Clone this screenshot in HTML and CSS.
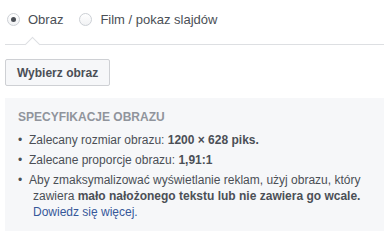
FILE: index.html
```html
<!DOCTYPE html>
<html lang="pl">
<head>
<meta charset="utf-8">
<link rel="stylesheet" href="styles.css">
</head>
<body>
<div class="page">
  <div class="tabs">
    <label class="opt"><span class="radio checked"></span><span class="opt-text">Obraz</span></label>
    <label class="opt"><span class="radio"></span><span class="opt-text">Film / pokaz slajdów</span></label>
    <span class="caret"></span>
  </div>
  <button class="btn">Wybierz obraz</button>
  <div class="spec">
    <div class="spec-title">SPECYFIKACJE OBRAZU</div>
    <ul class="spec-list">
      <li><span class="dot">•</span><span class="txt">Zalecany rozmiar obrazu: <b>1200 × 628 piks.</b></span></li>
      <li><span class="dot">•</span><span class="txt">Zalecane proporcje obrazu: <b>1,91:1</b></span></li>
      <li><span class="dot">•</span><span class="txt wrap">Aby zmaksymalizować wyświetlanie reklam, użyj obrazu, który zawiera <b>mało nałożonego tekstu lub nie zawiera go wcale.</b> <a class="link" href="#">Dowiedz się więcej.</a></span></li>
    </ul>
  </div>
</div>
</body>
</html>
```
FILE: styles.css
```css
* { box-sizing: border-box; }
html, body { margin: 0; padding: 0; background: #fff; }
body {
  font-family: "Liberation Sans", Arial, sans-serif;
  font-size: 12px;
  color: #4b4f56;
}
.page { padding: 0 4px 0 5px; }

.tabs {
  position: relative;
  height: 45px;
  border-bottom: 1px solid #dddfe2;
  display: flex;
  align-items: center;
  padding: 0 0 6px 2px;
  gap: 16px;
}
.opt {
  display: flex;
  align-items: center;
  gap: 8px;
  font-size: 13px;
  color: #4b4f56;
}
.radio {
  width: 13px;
  height: 13px;
  border-radius: 50%;
  border: 1px solid #ccd0d5;
  background: linear-gradient(#fff, #f1f2f4);
  display: flex;
  align-items: center;
  justify-content: center;
}
.radio.checked::after {
  content: "";
  width: 5px;
  height: 5px;
  border-radius: 50%;
  background: #4b4f56;
}
.caret {
  position: absolute;
  left: 22px;
  bottom: -6px;
  width: 11px;
  height: 11px;
  background: #fff;
  border-left: 1px solid #dddfe2;
  border-top: 1px solid #dddfe2;
  transform: rotate(45deg);
}

.btn {
  display: block;
  margin-top: 14px;
  height: 27px;
  padding: 0 11px;
  border: 1px solid #ced0d4;
  border-radius: 2px;
  background: #f6f7f9;
  color: #4b4f56;
  font-family: "Liberation Sans", Arial, sans-serif;
  font-size: 12px;
  font-weight: bold;
}

.spec {
  margin-top: 12px;
  background: #f6f7f9;
  padding: 11px 12px 11px 13px;
}
.spec-title {
  line-height: 16px;
  font-weight: bold;
  color: #90949c;
  margin-bottom: 7px;
}
.spec-list {
  list-style: none;
  margin: 0;
  padding: 0;
}
.spec-list li {
  display: flex;
  line-height: 16px;
  margin-top: 4px;
}
.spec-list li:first-child { margin-top: 0; }
.dot { width: 11px; flex: none; }
.txt.wrap { padding-left: 4px; text-indent: -4px; }
.link { color: #365899; text-decoration: none; }
```
